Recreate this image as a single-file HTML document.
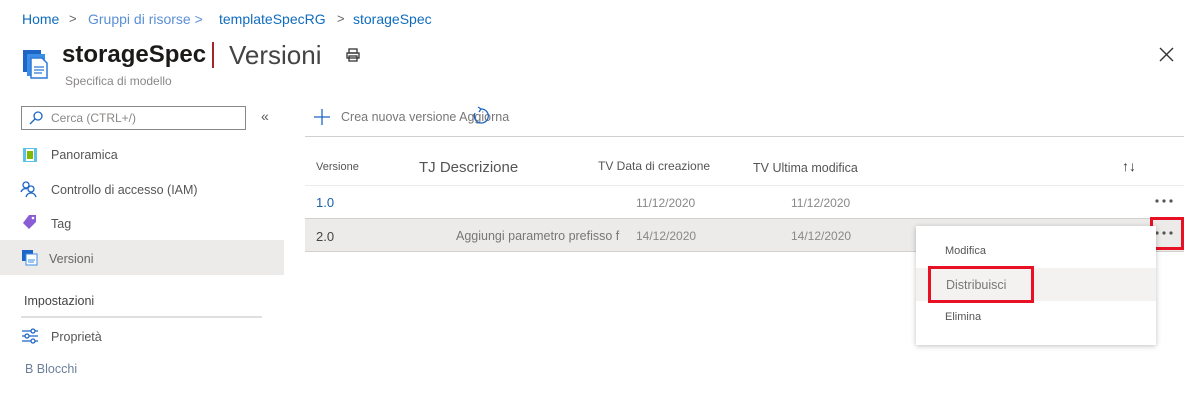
<!DOCTYPE html>
<html><head><meta charset="utf-8"><style>
*{margin:0;padding:0;box-sizing:border-box}
body{width:1200px;height:402px;background:#fff;font-family:"Liberation Sans",sans-serif;position:relative;overflow:hidden;color:#323130}
.a{position:absolute;white-space:nowrap}
.bc{font-size:14px;color:#0f6cbd}
</style></head><body>
<div class="a bc" style="left:22px;top:11px">Home</div>
<div class="a" style="left:69px;top:11px;font-size:13px;color:#666">&gt;</div>
<div class="a bc" style="left:88px;top:11px;color:#5a8fd6">Gruppi di risorse &gt;</div>
<div class="a bc" style="left:219px;top:11px">templateSpecRG</div>
<div class="a" style="left:337px;top:11px;font-size:13px;color:#666">&gt;</div>
<div class="a bc" style="left:353px;top:11px">storageSpec</div>

<svg class="a" style="left:21px;top:48px" width="32" height="32" viewBox="0 0 32 32"><rect x="2" y="2" width="18" height="22" fill="#1d66c6"/><rect x="6" y="6" width="18" height="22" fill="#3b8ee8"/><path d="M10 10h11l5 5v15H10z" fill="#fff" stroke="#2f7ad8" stroke-width="1.5"/><path d="M13 19h10M13 22h10M13 25h8" stroke="#2f7ad8" stroke-width="1.3"/></svg>
<div class="a" style="left:62px;top:41px;font-size:24px;font-weight:bold;color:#1b1a19">storageSpec</div>
<div class="a" style="left:212px;top:42px;width:2px;height:26px;background:#a4262c"></div>
<div class="a" style="left:229px;top:40px;font-size:26px;color:#444">Versioni</div>
<svg class="a" style="left:345px;top:47px" width="16" height="16" viewBox="0 0 16 16" fill="none" stroke="#333" stroke-width="1.3"><rect x="4" y="2" width="8" height="4"/><rect x="2" y="6" width="12" height="5"/><rect x="4" y="9" width="8" height="5"/></svg>
<div class="a" style="left:65px;top:74px;font-size:12px;color:#8a8886">Specifica di modello</div>
<svg class="a" style="left:1159px;top:47px" width="15" height="15" stroke="#333" stroke-width="1.4"><path d="M1 1l13 13M14 1L1 14"/></svg>

<div class="a" style="left:21px;top:106px;width:225px;height:24px;border:1px solid #8a8886"></div>
<svg class="a" style="left:28px;top:110px" width="16" height="16" viewBox="0 0 16 16" fill="none" stroke="#1d66c6" stroke-width="1.3"><circle cx="10" cy="6" r="4"/><path d="M7 9l-5 5"/></svg>
<div class="a" style="left:51px;top:111px;font-size:12px;color:#8a8886">Cerca (CTRL+/)</div>
<div class="a" style="left:261px;top:108px;font-size:14px;color:#555">«</div>

<svg class="a" style="left:22px;top:147px" width="16" height="16"><rect x="1" y="1" width="14" height="14" fill="#5ec1e6"/><rect x="4" y="2" width="8" height="12" fill="#fff"/><rect x="5" y="4" width="6" height="8" fill="#7fba00"/></svg>
<div class="a" style="left:51px;top:148px;font-size:12.5px;color:#555">Panoramica</div>
<svg class="a" style="left:20px;top:180px" width="18" height="18" fill="none" stroke="#1d66c6" stroke-width="1.3"><circle cx="6" cy="5" r="3"/><circle cx="11" cy="9" r="3"/><path d="M1 12c1-3 4-4 6-3M6 17c1-3 3-4 5-4s4 1 5 4"/></svg>
<div class="a" style="left:51px;top:183px;font-size:12.5px;color:#555">Controllo di accesso (IAM)</div>
<svg class="a" style="left:22px;top:214px" width="16" height="16"><path d="M7 1h7v7l-7 7-6-6z" fill="#8a5cd6"/><circle cx="11" cy="4" r="1.3" fill="#fff"/></svg>
<div class="a" style="left:51px;top:217px;font-size:12.5px;color:#555">Tag</div>
<div class="a" style="left:0;top:240px;width:284px;height:35px;background:#edebe9"></div>
<svg class="a" style="left:21px;top:249px" width="17" height="17"><rect x="1" y="1" width="11" height="11" fill="#1d66c6"/><rect x="5" y="5" width="11" height="11" fill="#fff" stroke="#3b8ee8"/><path d="M7 11h7M7 13h6" stroke="#3b8ee8"/></svg>
<div class="a" style="left:49px;top:252px;font-size:12.5px;color:#666">Versioni</div>
<div class="a" style="left:24px;top:294px;font-size:12.5px;color:#444">Impostazioni</div>
<div class="a" style="left:21px;top:316px;width:241px;height:2px;background:#e1dfdd"></div>
<svg class="a" style="left:21px;top:328px" width="18" height="16" fill="none" stroke="#1d66c6" stroke-width="1.3"><path d="M1 3h16M1 8h16M1 13h16"/><circle cx="12" cy="3" r="2" fill="#fff"/><circle cx="6" cy="8" r="2" fill="#fff"/><circle cx="12" cy="13" r="2" fill="#fff"/></svg>
<div class="a" style="left:51px;top:330px;font-size:12.5px;color:#555">Proprietà</div>
<div class="a" style="left:25px;top:362px;font-size:12.5px;color:#6b7f99">B Blocchi</div>

<svg class="a" style="left:314px;top:109px" width="16" height="16" stroke="#1d66c6" stroke-width="1.3"><path d="M8 0v16M0 8h16"/></svg>
<div class="a" style="left:341px;top:110px;font-size:12.5px;color:#777">Crea nuova versione Aggiorna</div>
<svg class="a" style="left:471px;top:106px" width="20" height="20" fill="none" stroke="#1d66c6" stroke-width="1.3"><path d="M4 7a7 7 0 1 0 6-4"/><path d="M7 1l3 2-2 3"/></svg>
<div class="a" style="left:305px;top:136px;width:879px;height:1px;background:#d2d0ce"></div>

<div class="a" style="left:316px;top:161px;font-size:11px;color:#555">Versione</div>
<div class="a" style="left:419px;top:159px;font-size:15px;color:#555">TJ Descrizione</div>
<div class="a" style="left:598px;top:159px;font-size:12px;color:#555">TV Data di creazione</div>
<div class="a" style="left:753px;top:161px;font-size:12.5px;color:#555">TV Ultima modifica</div>
<div class="a" style="left:1122px;top:158px;font-size:14px;color:#333">↑↓</div>
<div class="a" style="left:305px;top:185px;width:879px;height:1px;background:#edebe9"></div>
<div class="a" style="left:316px;top:195px;font-size:13px;color:#1d5fa8">1.0</div>
<div class="a" style="left:636px;top:196px;font-size:12px;color:#888">11/12/2020</div>
<div class="a" style="left:791px;top:196px;font-size:12px;color:#888">11/12/2020</div>
<svg class="a" style="left:1155px;top:198px" width="18" height="6" fill="#555"><circle cx="2" cy="3" r="1.6"/><circle cx="9" cy="3" r="1.6"/><circle cx="16" cy="3" r="1.6"/></svg>
<div class="a" style="left:305px;top:218px;width:879px;height:34px;background:#edebe9;border-top:1px solid #d2d0ce;border-bottom:1px solid #d2d0ce"></div>
<div class="a" style="left:316px;top:229px;font-size:13px;color:#444">2.0</div>
<div class="a" style="left:456px;top:229px;font-size:12.5px;color:#777">Aggiungi parametro prefisso f</div>
<div class="a" style="left:636px;top:229px;font-size:12px;color:#888">14/12/2020</div>
<div class="a" style="left:791px;top:229px;font-size:12px;color:#888">14/12/2020</div>
<div class="a" style="left:1150px;top:217px;width:34px;height:33px;border:3px solid #e81123"></div>
<svg class="a" style="left:1155px;top:230px" width="18" height="6" fill="#555"><circle cx="2" cy="3" r="1.6"/><circle cx="9" cy="3" r="1.6"/><circle cx="16" cy="3" r="1.6"/></svg>

<div class="a" style="left:916px;top:226px;width:240px;height:119px;background:#fff;box-shadow:0 1px 5px rgba(0,0,0,.25)"></div>
<div class="a" style="left:945px;top:245px;font-size:11px;color:#555">Modifica</div>
<div class="a" style="left:916px;top:268px;width:240px;height:33px;background:#f3f2f1"></div>
<div class="a" style="left:928px;top:266px;width:106px;height:37px;border:3px solid #e81123"></div>
<div class="a" style="left:946px;top:278px;font-size:12.5px;color:#777">Distribuisci</div>
<div class="a" style="left:945px;top:311px;font-size:11px;color:#555">Elimina</div>
</body></html>
